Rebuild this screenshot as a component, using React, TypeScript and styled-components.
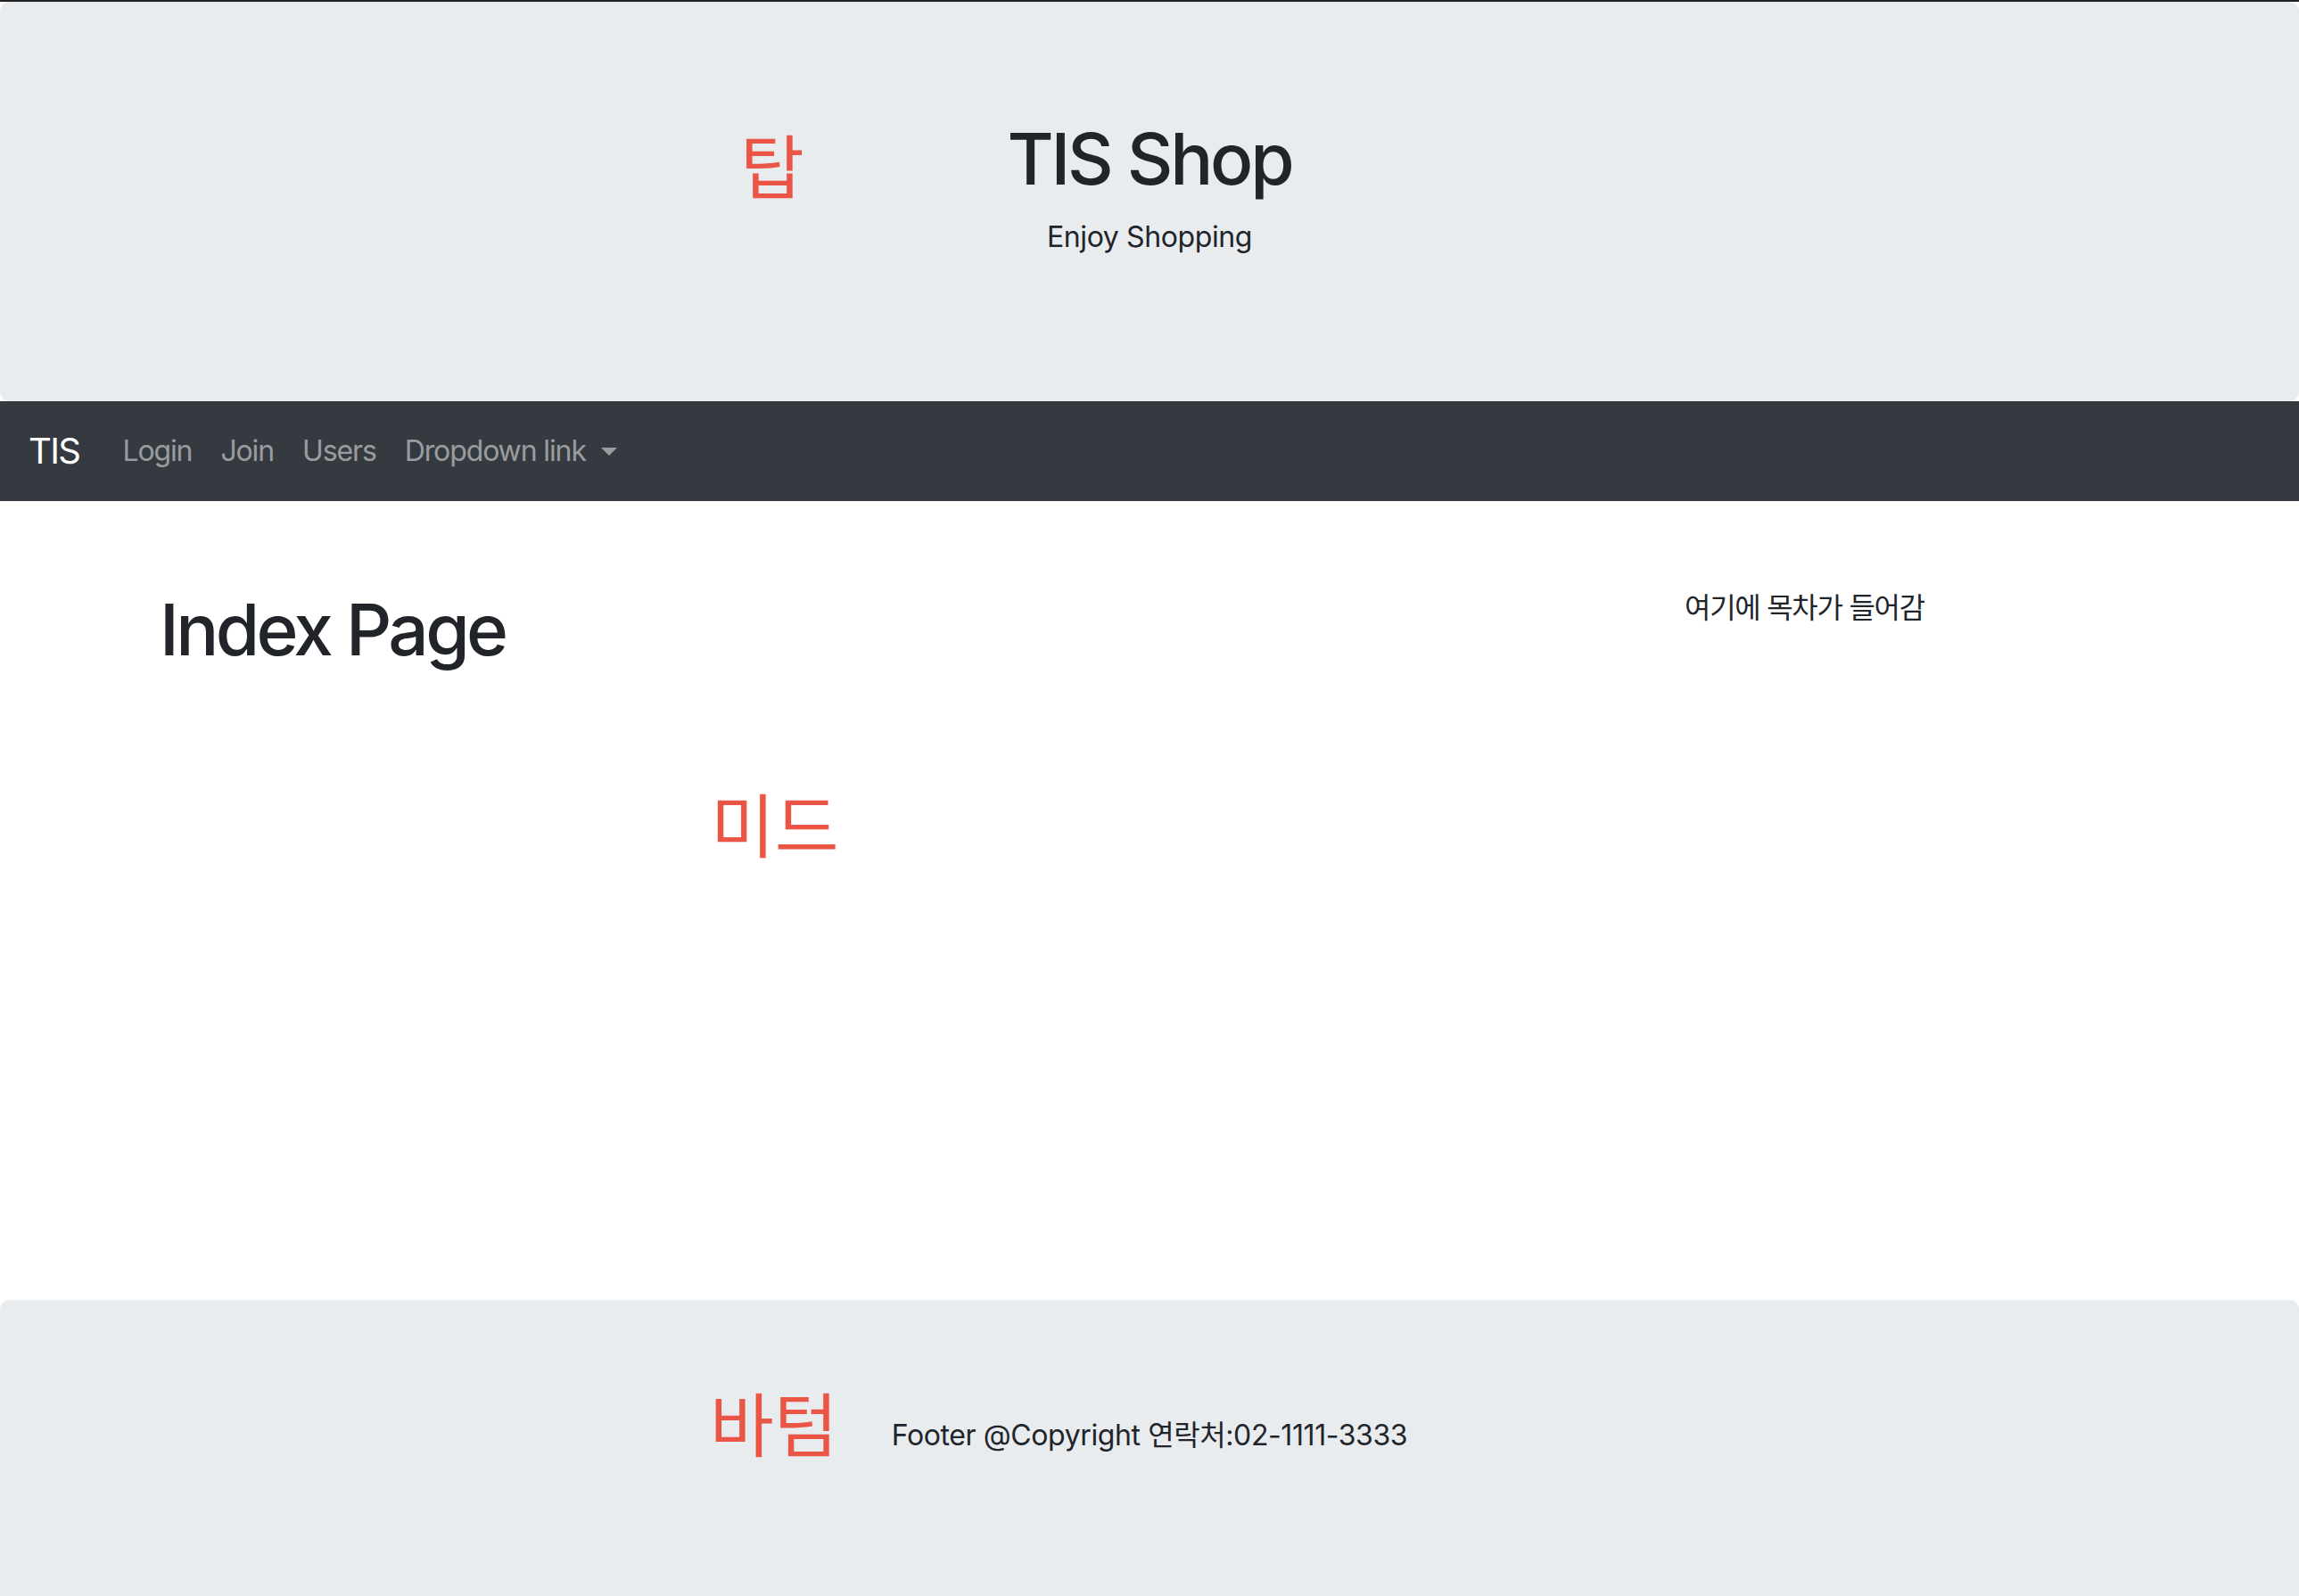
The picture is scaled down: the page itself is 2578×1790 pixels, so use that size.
import styled, { createGlobalStyle } from "styled-components";

const GlobalStyle = createGlobalStyle`
  html, body {
    margin: 0;
    padding: 0;
    background: #fff;
  }
  body {
    font-family: Inter, "Noto Sans CJK KR", sans-serif;
    color: #212529;
    border-top: 2px solid #222;
    letter-spacing: -0.025em;
  }
  * {
    box-sizing: border-box;
  }
`;

const Jumbotron = styled.header`
  position: relative;
  background-color: #e9ecef;
  border-radius: 10px;
  padding: 128px 64px;
  text-align: center;
`;

const Title = styled.h1`
  margin: 0 0 16px;
  font-size: 80px;
  font-weight: 500;
  line-height: 1.2;
  letter-spacing: -0.04em;
`;

const Lead = styled.p`
  margin: 0 0 32px;
  font-size: 32px;
  line-height: 1.5;
`;

const Note = styled.span<{ top: number; left: number }>`
  position: absolute;
  top: ${(p) => p.top}px;
  left: ${(p) => p.left}px;
  font-family: "Noto Sans CJK KR", sans-serif;
  font-size: 78px;
  line-height: 1;
  font-weight: 400;
  letter-spacing: 0;
  color: #eb5545;
`;

const Navbar = styled.nav`
  display: flex;
  align-items: center;
  height: 112px;
  padding: 16px 32px;
  background-color: #343a40;
`;

const Brand = styled.a`
  font-size: 40px;
  line-height: 1.5;
  padding: 10px 0;
  margin-right: 32px;
  color: #fff;
  text-decoration: none;
  letter-spacing: -0.04em;
`;

const NavList = styled.ul`
  display: flex;
  list-style: none;
  margin: 0;
  padding: 0;
`;

const NavLink = styled.a<{ dropdown?: boolean }>`
  display: block;
  padding: 16px;
  font-size: 32px;
  line-height: 1.5;
  letter-spacing: -0.035em;
  color: rgba(255, 255, 255, 0.5);
  text-decoration: none;
  ${(p) =>
    p.dropdown &&
    `
    &::after {
      content: "";
      display: inline-block;
      margin-left: 17px;
      vertical-align: 6px;
      border-top: 9.6px solid;
      border-right: 9.6px solid transparent;
      border-left: 9.6px solid transparent;
    }
  `}
`;

const Main = styled.main`
  position: relative;
  height: 896px;
  padding-top: 96px;
`;

const Container = styled.div`
  width: 2280px;
  margin: 0 auto;
  display: grid;
  grid-template-columns: 3fr 1fr;
`;

const Col = styled.div`
  padding: 0 30px;
`;

const PageTitle = styled.h1`
  margin: 0;
  font-size: 80px;
  font-weight: 500;
  line-height: 1.2;
  letter-spacing: -0.045em;
`;

const Toc = styled.p`
  margin: 0;
  font-size: 32px;
  line-height: 1.5;
  letter-spacing: -0.04em;
`;

const Footer = styled.footer`
  position: relative;
  background-color: #e9ecef;
  border-radius: 10px 10px 0 0;
  padding: 128px 64px;
  height: 332px;
  text-align: center;
  font-size: 32px;
  line-height: 1.5;
`;

export default function App() {
  return (
    <>
      <GlobalStyle />
      <Jumbotron>
        <Note top={142} left={830}>탑</Note>
        <Title>TIS Shop</Title>
        <Lead>Enjoy Shopping</Lead>
      </Jumbotron>
      <Navbar>
        <Brand href="#">TIS</Brand>
        <NavList>
          <li><NavLink href="#">Login</NavLink></li>
          <li><NavLink href="#">Join</NavLink></li>
          <li><NavLink href="#">Users</NavLink></li>
          <li><NavLink href="#" dropdown>Dropdown link</NavLink></li>
        </NavList>
      </Navbar>
      <Main>
        <Note top={321} left={797}>미드</Note>
        <Container>
          <Col>
            <PageTitle>Index Page</PageTitle>
          </Col>
          <Col>
            <Toc>여기에 목차가 들어감</Toc>
          </Col>
        </Container>
      </Main>
      <Footer>
        <Note top={97} left={796}>바텀</Note>
        Footer @Copyright 연락처:02-1111-3333
      </Footer>
    </>
  );
}
